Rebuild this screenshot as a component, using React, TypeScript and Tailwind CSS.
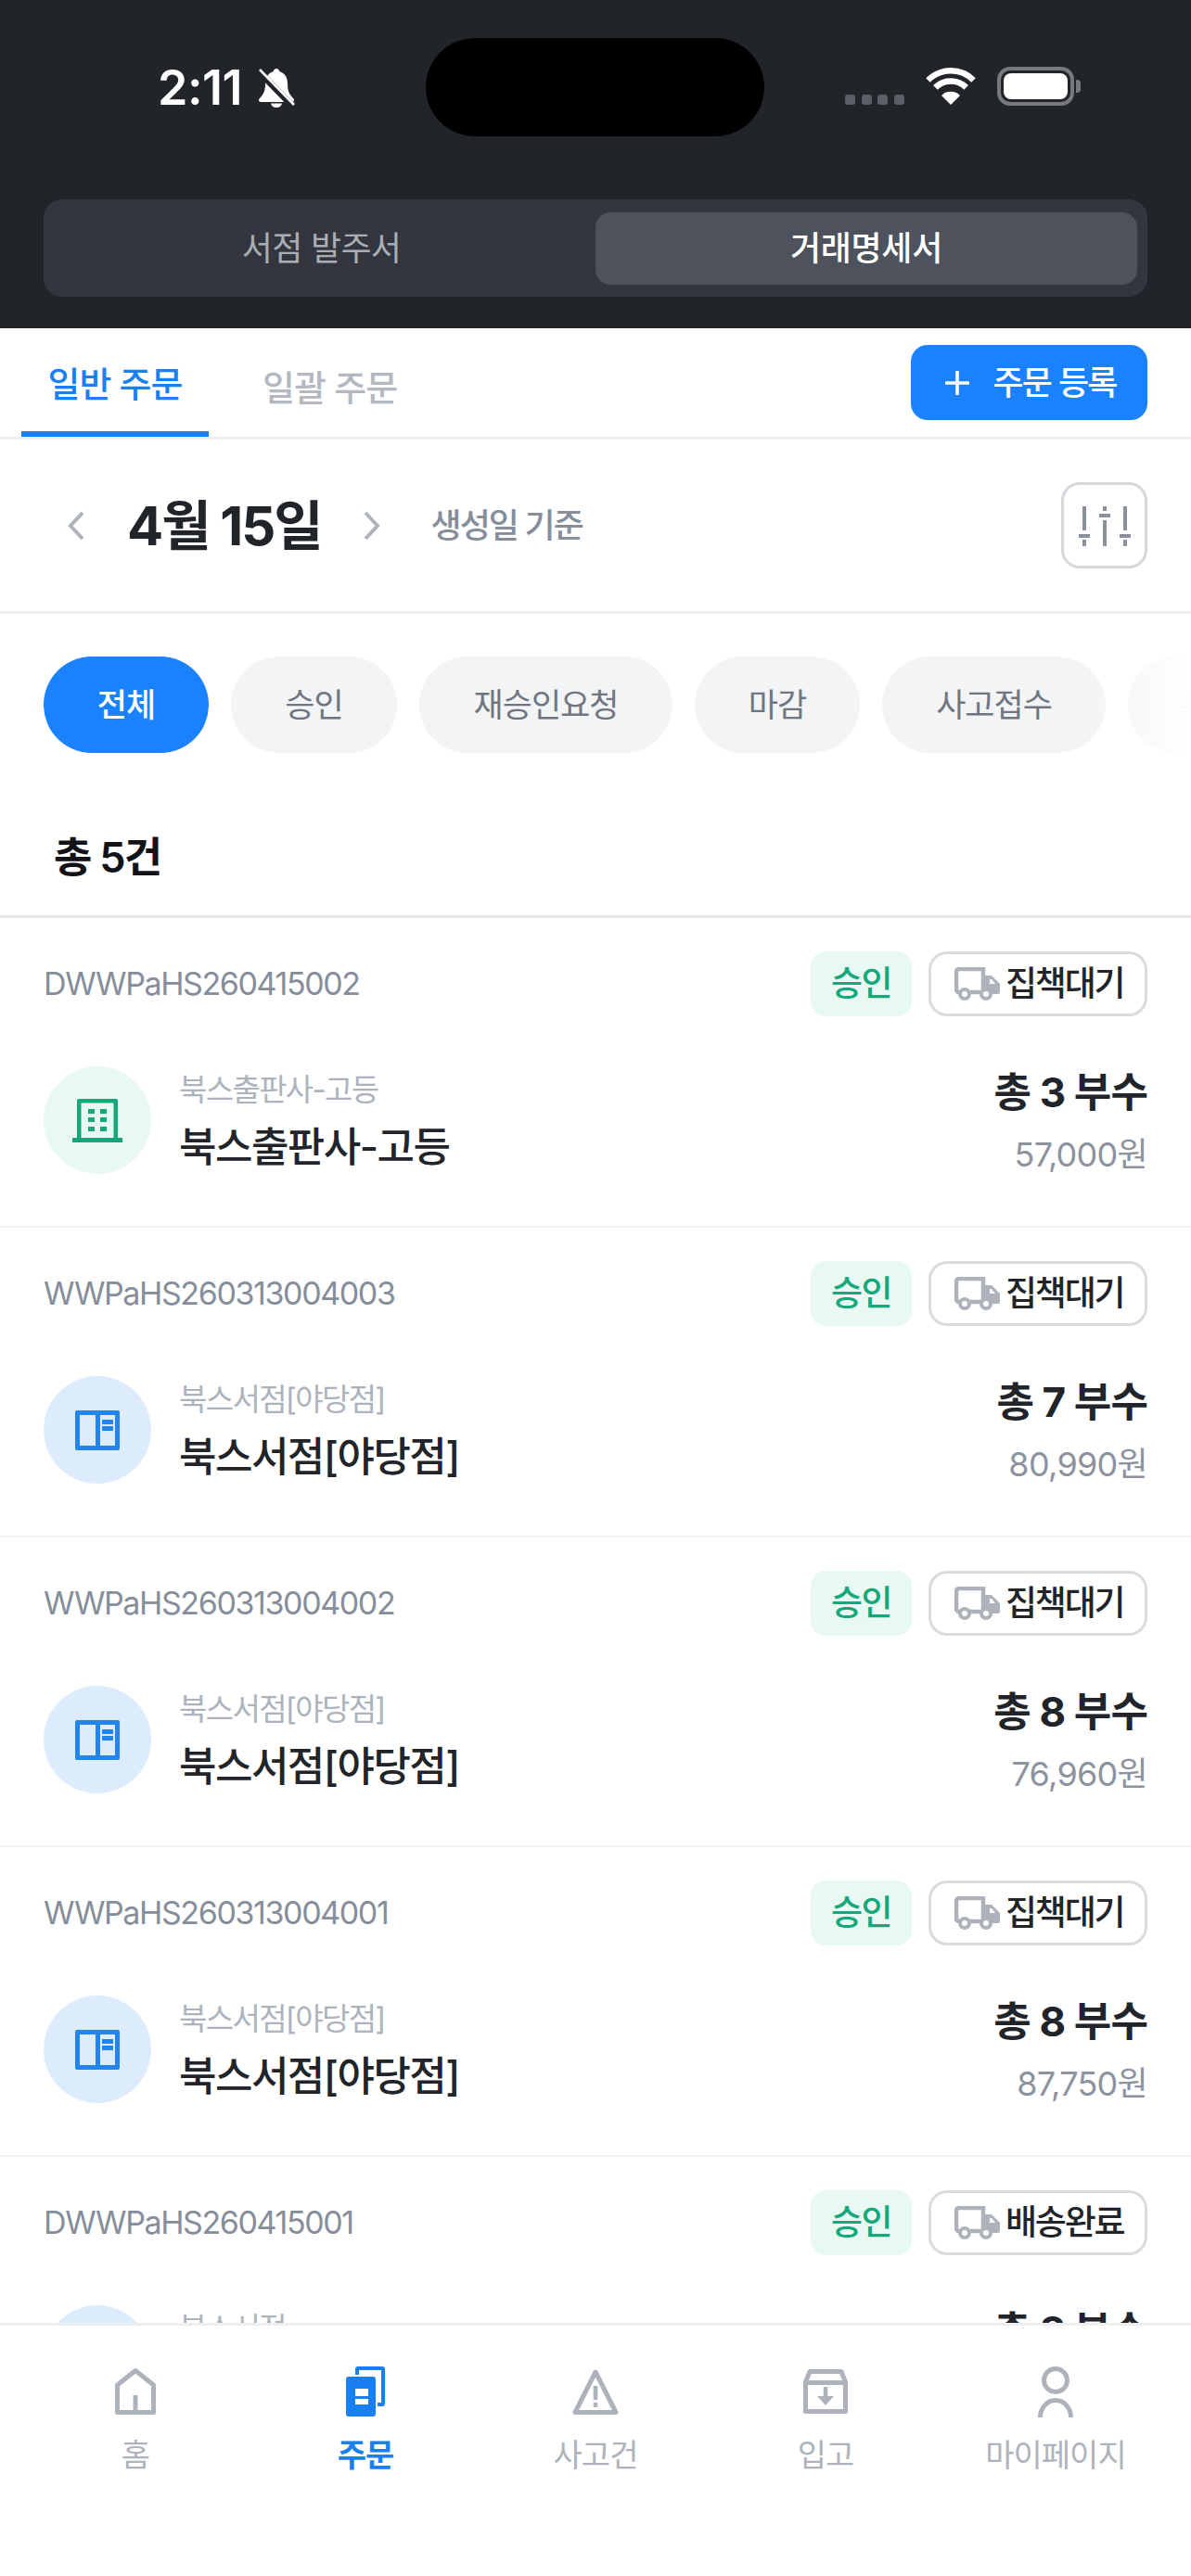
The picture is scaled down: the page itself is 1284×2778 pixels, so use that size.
import React from "react";

const FONT = "font-['Inter','Noto_Sans_CJK_KR',sans-serif]";

function Bell() {
  return (
    <svg width="42" height="44" viewBox="0 0 42 44">
      <path d="M21 1c-2 0-3 1.500-3.400 3C11.500 6 9 11 9 17c0 6-1 10-3.500 13C4 32 2 33.500 2 35c0 1 1 2 2.500 2h33c1.500 0 2.500-1 2.500-2 0-1.500-2-3-3.500-5C34 27 33 23 33 17c0-6-2.500-11-8.600-13C24 2.500 23 1 21 1z" fill="#fff" />
      <path d="M15 38.500h12c-.5 3-3 4.500-6 4.500s-5.500-1.500-6-4.500z" fill="#fff" />
      <path d="M2 4 L41 44" stroke="#212429" strokeWidth="7" />
      <path d="M3 2 L40 40" stroke="#fff" strokeWidth="2.600" />
    </svg>
  );
}

function Wifi() {
  return (
    <svg width="56" height="40" viewBox="0 0 56 40" fill="none">
      <path d="M3.500 13.500A34.700 34.700 0 0 1 52.500 13.500" stroke="#fff" strokeWidth="6.500" />
      <path d="M11.400 21.400A23.500 23.500 0 0 1 44.600 21.400" stroke="#fff" strokeWidth="6.500" />
      <path d="M28 40 L18 30 A14 14 0 0 1 38 30 Z" fill="#fff" />
    </svg>
  );
}

function Sliders() {
  return (
    <svg width="56" height="44" viewBox="0 0 56 44" stroke="#8b919c" strokeWidth="4" fill="none">
      <path d="M6 1v26M0 33h12M6 37v7" />
      <path d="M28 1v5M22 11h12M28 16v28" />
      <path d="M50 1v26M44 33h12M50 37v7" />
    </svg>
  );
}

function Truck() {
  return (
    <svg width="49" height="36" viewBox="0 0 49 36" fill="none" className="shrink-0">
      <path d="M6 27H5a3 3 0 0 1-3-3V5a3 3 0 0 1 3-3h26v25H16" stroke="#aeb3bb" strokeWidth="4.500" />
      <path d="M33 9h7l9 9v9a2 2 0 0 1-2 2H33z" fill="#aeb3bb" />
      <path d="M38 13h2l4 5h-6z" fill="#fff" />
      <circle cx="11" cy="29" r="5" fill="#fff" stroke="#aeb3bb" strokeWidth="4" />
      <circle cx="34" cy="29" r="5" fill="#fff" stroke="#aeb3bb" strokeWidth="4" />
    </svg>
  );
}

function Building() {
  return (
    <svg width="54" height="48" viewBox="0 0 54 48" fill="#17a67a">
      <path d="M5 46V3a2 2 0 0 1 2-2h40a2 2 0 0 1 2 2v43h-4.500V5.500h-35V46z" />
      <rect x="0" y="43" width="54" height="5" />
      <rect x="17" y="12" width="7" height="5" />
      <rect x="30" y="12" width="7" height="5" />
      <rect x="17" y="21" width="7" height="5" />
      <rect x="30" y="21" width="7" height="5" />
      <rect x="17" y="31" width="7" height="5" />
      <rect x="30" y="31" width="7" height="5" />
    </svg>
  );
}

function BookPanel() {
  return (
    <svg width="48" height="43" viewBox="0 0 48 43" fill="#2285ee">
      <path fillRule="evenodd" d="M2 0h44a2 2 0 0 1 2 2v39a2 2 0 0 1-2 2H2a2 2 0 0 1-2-2V2a2 2 0 0 1 2-2zM5 5v33h17V5zM27 5v33h16V5z" />
      <rect x="29" y="10" width="12" height="5" />
      <rect x="29" y="17" width="12" height="5" />
    </svg>
  );
}

function HomeIcon() {
  return (
    <svg width="44" height="50" viewBox="0 0 44 50" fill="none" stroke="#aeb3bb" strokeWidth="5" strokeLinejoin="round">
      <path d="M2.500 47.500V18L22 2.500 41.500 18v29.500z" />
      <path d="M22 47V29" />
    </svg>
  );
}

function OrdersIcon() {
  return (
    <svg width="42" height="54" viewBox="0 0 42 54" fill="#1a7ff0">
      <path d="M10 9V3a3 3 0 0 1 3-3h26a3 3 0 0 1 3 3v37a3 3 0 0 1-3 3h-5v-4h4V4H14v5z" />
      <path fillRule="evenodd" d="M3 11h26a3 3 0 0 1 3 3v37a3 3 0 0 1-3 3H3a3 3 0 0 1-3-3V14a3 3 0 0 1 3-3zM10 24v8h14v-8zM10 35v6h14v-6z" />
    </svg>
  );
}

function WarnIcon() {
  return (
    <svg width="50" height="49" viewBox="0 0 50 49" fill="none">
      <path d="M25 3 L47 46.500H3z" stroke="#aeb3bb" strokeWidth="5" strokeLinejoin="round" />
      <rect x="22.700" y="18" width="4.600" height="15" fill="#aeb3bb" />
      <rect x="22.700" y="36" width="4.600" height="5" fill="#aeb3bb" />
    </svg>
  );
}

function InboxIcon() {
  return (
    <svg width="48" height="48" viewBox="0 0 48 48" fill="none">
      <path d="M2.500 14 7 2.500h34L45.500 14v31.500h-43z" stroke="#aeb3bb" strokeWidth="5" strokeLinejoin="round" />
      <path d="M2 14.500h44" stroke="#aeb3bb" strokeWidth="5" />
      <path d="M24 19v12" stroke="#aeb3bb" strokeWidth="4.500" />
      <path d="M15 29h18l-9 10z" fill="#aeb3bb" />
    </svg>
  );
}

function PersonIcon() {
  return (
    <svg width="38" height="56" viewBox="0 0 38 56" fill="none" stroke="#aeb3bb" strokeWidth="5">
      <circle cx="19" cy="16" r="12.500" />
      <path d="M2.500 56a16.500 18.500 0 0 1 33 0" />
    </svg>
  );
}

const rows = [
  { id: "DWWPaHS260415002", name: "북스출판사-고등", qty: "총 3 부수", price: "57,000원", status: "집책대기", kind: "pub" },
  { id: "WWPaHS260313004003", name: "북스서점[야당점]", qty: "총 7 부수", price: "80,990원", status: "집책대기", kind: "book" },
  { id: "WWPaHS260313004002", name: "북스서점[야당점]", qty: "총 8 부수", price: "76,960원", status: "집책대기", kind: "book" },
  { id: "WWPaHS260313004001", name: "북스서점[야당점]", qty: "총 8 부수", price: "87,750원", status: "집책대기", kind: "book" },
  { id: "DWWPaHS260415001", name: "북스서점", qty: "총 8 부수", price: "90,000원", status: "배송완료", kind: "book" },
];

function Row({ r }: { r: (typeof rows)[number] }) {
  return (
    <div className="h-[334px] shrink-0 border-b-[2px] border-[#f1f2f4] px-[47px] pt-[36px]">
      <div className="flex h-[70px] items-center justify-between">
        <span className="text-[34px] leading-none tracking-[-0.041em] text-[#868e9b]">{r.id}</span>
        <div className="flex items-center gap-[18px]">
          <span className="flex h-[70px] w-[109px] items-center justify-center rounded-[16px] bg-[#e8f9f3] text-[37px] font-medium tracking-[-0.04em] text-[#14a87a]">승인</span>
          <span className="flex h-[70px] w-[236px] items-center gap-[6px] rounded-[20px] border-[3px] border-[#d9dbdf] pl-[25px] text-[37px] font-medium tracking-[-0.06em] text-[#212429]">
            <Truck />
            {r.status}
          </span>
        </div>
      </div>
      <div className="mt-[54px] flex h-[116px] items-center">
        <div className={`flex h-[116px] w-[116px] shrink-0 items-center justify-center rounded-full ${r.kind === "pub" ? "bg-[#e8f9f3]" : "bg-[#dcecfd]"}`}>
          {r.kind === "pub" ? <Building /> : <BookPanel />}
        </div>
        <div className="ml-[30px] flex flex-col">
          <span className="text-[33px] leading-[48px] tracking-[-0.05em] text-[#adb3bc]">{r.name}</span>
          <span className="mt-[10px] text-[44px] font-medium leading-[56px] tracking-[-0.035em] text-[#212429]">{r.name}</span>
        </div>
        <div className="ml-auto flex flex-col items-end pt-[3px]">
          <span className="text-[44px] font-bold leading-[50px] tracking-[-0.02em] text-[#212429]">{r.qty}</span>
          <span className="mt-[20px] text-[36px] leading-[44px] tracking-[-0.02em] text-[#8d939e]">{r.price}</span>
        </div>
      </div>
    </div>
  );
}

const chips = [
  { label: "전체", w: "w-[178px]", active: true },
  { label: "승인", w: "w-[179px]" },
  { label: "재승인요청", w: "w-[273px]" },
  { label: "마감", w: "w-[178px]" },
  { label: "사고접수", w: "w-[241px]" },
  { label: "취소", w: "w-[178px]" },
];

const nav = [
  { label: "홈", icon: <HomeIcon /> },
  { label: "주문", icon: <OrdersIcon />, active: true },
  { label: "사고건", icon: <WarnIcon /> },
  { label: "입고", icon: <InboxIcon /> },
  { label: "마이페이지", icon: <PersonIcon /> },
];

export default function App() {
  return (
    <div className={`flex h-[2778px] w-[1284px] flex-col overflow-hidden bg-white ${FONT}`}>
      <header className="h-[354px] shrink-0 bg-[#212429] px-[47px] pt-[41px]">
        <div className="flex h-[106px] items-start">
          <div className="flex w-[412px] items-center pl-[123px] pt-[31px]">
            <span className="text-[52px] font-semibold leading-[46px] tracking-[-0.01em] text-white">2:11</span>
            <span className="ml-[16px]"><Bell /></span>
          </div>
          <div className="h-[106px] w-[365px] rounded-[53px] bg-black" />
          <div className="ml-[87px] flex items-start pt-[31px]">
            <div className="mt-[30px] flex gap-[6.500px]">
              <i className="h-[11px] w-[11px] rounded-[3px] bg-[#5c5f65]" />
              <i className="h-[11px] w-[11px] rounded-[3px] bg-[#5c5f65]" />
              <i className="h-[11px] w-[11px] rounded-[3px] bg-[#5c5f65]" />
              <i className="h-[11px] w-[11px] rounded-[3px] bg-[#5c5f65]" />
            </div>
            <div className="ml-[22px] mt-px"><Wifi /></div>
            <div className="ml-[22px] flex items-center">
              <div className="h-[42px] w-[83px] rounded-[14px] border-[4px] border-[#77797e] p-[3px]">
                <div className="h-full w-full rounded-[8px] bg-white" />
              </div>
              <div className="ml-[2px] h-[14px] w-[5px] rounded-r-[4px] bg-[#77797e]" />
            </div>
          </div>
        </div>
        <div className="mt-[68px] flex h-[105px] items-center rounded-[20px] bg-[#33363e] pr-[11px]">
          <div className="flex-1 pl-[4px] text-center text-[36px] tracking-[-0.02em] text-[#a9adb4]">서점 발주서</div>
          <div className="flex h-[78px] w-[584px] items-center justify-center rounded-[16px] bg-[#4e525c] text-[36px] font-medium tracking-[-0.01em] text-white">거래명세서</div>
        </div>
      </header>

      <div className="flex h-[120px] shrink-0 justify-between border-b-[3px] border-[#eceef0] pl-[23px] pr-[47px]">
        <div className="flex items-end">
          <div className="flex h-full w-[202px] items-center justify-center border-b-[6px] border-[#1a7ff0] pt-[10px] text-[38px] font-medium tracking-[-0.025em] text-[#1a7ff0]">일반 주문</div>
          <div className="ml-[58px] flex h-full items-center pt-[12px] text-[38px] font-medium tracking-[-0.025em] text-[#b4b8c0]">일괄 주문</div>
        </div>
        <div className="mt-[18px] flex h-[81px] w-[255px] items-center justify-center gap-[25px] rounded-[18px] bg-[#1a82ff] pl-[4px] text-[36px] font-medium tracking-[-0.05em] text-white">
          <svg width="26" height="26" viewBox="0 0 26 26" stroke="#fff" strokeWidth="3.500"><path d="M13 0v26M0 13h26" /></svg>
          주문 등록
        </div>
      </div>

      <div className="flex h-[188px] shrink-0 items-center border-b-[3px] border-[#eceef0] pl-[72px] pr-[47px]">
        <svg width="20" height="32" viewBox="0 0 20 32" fill="none" stroke="#aeb3bb" strokeWidth="4"><path d="M17 2 4 16l13 14" /></svg>
        <span className="ml-[45px] text-[58px] font-bold leading-none tracking-[-0.035em] text-[#212429]">4월 15일</span>
        <svg className="ml-[44px]" width="20" height="32" viewBox="0 0 20 32" fill="none" stroke="#aeb3bb" strokeWidth="4"><path d="m3 2 13 14L3 30" /></svg>
        <span className="ml-[54px] text-[36px] font-medium tracking-[-0.055em] text-[#868e9b]">생성일 기준</span>
        <div className="ml-auto flex h-[93px] w-[93px] items-center justify-center rounded-[20px] border-[3px] border-[#d5d8dc]">
          <Sliders />
        </div>
      </div>

      <div className="relative h-[150px] shrink-0 overflow-hidden pl-[47px] pt-[46px]">
        <div className="flex w-[1400px] gap-[24px]">
          {chips.map((c) => (
            <div key={c.label} className={`flex h-[104px] items-center justify-center rounded-full text-[35px] tracking-[-0.03em] ${c.w} ${c.active ? "bg-[#1a82ff] font-medium text-white" : "bg-[#f2f4f6] text-[#6f7682]"}`}>{c.label}</div>
          ))}
        </div>
        <div className="absolute bottom-0 right-0 top-0 w-[110px] bg-gradient-to-r from-white/0 to-white" />
      </div>

      <div className="flex h-[178px] shrink-0 items-start border-b-[3px] border-[#e4e6e9] pl-[58px] pt-[87px]">
        <span className="text-[45px] font-semibold leading-[52px] tracking-[-0.04em] text-[#111317]">총 5건</span>
      </div>

      <div className="flex min-h-0 flex-1 flex-col overflow-hidden">
        {rows.map((r) => (
          <Row key={r.id} r={r} />
        ))}
      </div>

      <nav className="flex h-[273px] shrink-0 items-start border-t-[3px] border-[#eceef0] bg-white px-[22px] pt-[42px]">
        {nav.map((n) => (
          <div key={n.label} className="flex w-[248px] flex-col items-center">
            <div className="flex h-[58px] items-center justify-center">{n.icon}</div>
            <span className={`mt-[18px] text-[34px] leading-[44px] tracking-[-0.03em] ${n.active ? "font-semibold text-[#1a7ff0]" : "text-[#aeb3bb]"}`}>{n.label}</span>
          </div>
        ))}
      </nav>
    </div>
  );
}
